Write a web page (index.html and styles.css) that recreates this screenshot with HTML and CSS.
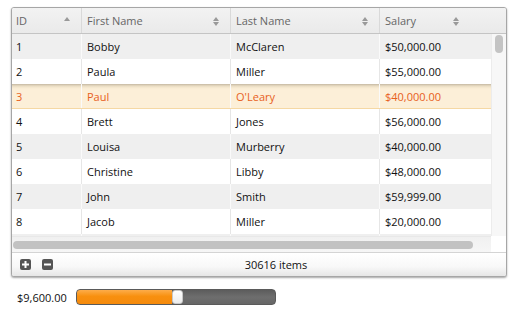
FILE: index.html
```html
<!DOCTYPE html>
<html>
<head>
<meta charset="utf-8">
<link rel="stylesheet" href="styles.css">
</head>
<body>
<div class="grid">
  <div class="head">
    <div class="hc c-id"><span>ID</span><i class="sort up"></i></div>
    <div class="hc c-fn"><span>First Name</span><i class="sort both"></i></div>
    <div class="hc c-ln"><span>Last Name</span><i class="sort both"></i></div>
    <div class="hc c-sal"><span>Salary</span><i class="sort both"></i></div>
    <div class="hc filler"></div>
  </div>
  <div class="main">
    <div class="rows">
      <div class="row alt"><div class="cell c-id">1</div><div class="cell c-fn">Bobby</div><div class="cell c-ln">McClaren</div><div class="cell c-last">$50,000.00</div></div>
      <div class="row"><div class="cell c-id">2</div><div class="cell c-fn">Paula</div><div class="cell c-ln">Miller</div><div class="cell c-last">$55,000.00</div></div>
      <div class="row sel"><div class="cell c-id">3</div><div class="cell c-fn">Paul</div><div class="cell c-ln">O'Leary</div><div class="cell c-last">$40,000.00</div></div>
      <div class="row"><div class="cell c-id">4</div><div class="cell c-fn">Brett</div><div class="cell c-ln">Jones</div><div class="cell c-last">$56,000.00</div></div>
      <div class="row alt"><div class="cell c-id">5</div><div class="cell c-fn">Louisa</div><div class="cell c-ln">Murberry</div><div class="cell c-last">$40,000.00</div></div>
      <div class="row"><div class="cell c-id">6</div><div class="cell c-fn">Christine</div><div class="cell c-ln">Libby</div><div class="cell c-last">$48,000.00</div></div>
      <div class="row alt"><div class="cell c-id">7</div><div class="cell c-fn">John</div><div class="cell c-ln">Smith</div><div class="cell c-last">$59,999.00</div></div>
      <div class="row"><div class="cell c-id">8</div><div class="cell c-fn">Jacob</div><div class="cell c-ln">Miller</div><div class="cell c-last">$20,000.00</div></div>
      <div class="row alt"><div class="cell c-id"></div><div class="cell c-fn"></div><div class="cell c-ln"></div><div class="cell c-last"></div></div>
    </div>
    <div class="vscroll"><div class="vthumb"></div></div>
  </div>
  <div class="hrow">
    <div class="hscroll"><div class="hthumb"></div></div>
    <div class="corner"></div>
  </div>
  <div class="foot">
    <div class="btns">
      <span class="btn"><svg width="11" height="11" viewBox="0 0 11 11"><rect x="2" y="4.5" width="7" height="2" fill="#fff"/><rect x="4.5" y="2" width="2" height="7" fill="#fff"/></svg></span>
      <span class="btn"><svg width="11" height="11" viewBox="0 0 11 11"><rect x="2" y="4.5" width="7" height="2" fill="#fff"/></svg></span>
    </div>
    <div class="count">30616 items</div>
  </div>
</div>
<div class="slider-row">
  <div class="slabel">$9,600.00</div>
  <div class="track">
    <div class="fill" style="width:95px"></div>
    <div class="thumb"></div>
  </div>
</div>
</body>
</html>
```

FILE: styles.css
```css
html, body {
  margin: 0;
  padding: 0;
  background: #fff;
}
body {
  padding: 7px 0 0 11px;
  font-family: "Open Sans", "Noto Sans", sans-serif;
  font-size: 11px;
  color: #111;
}
.grid {
  width: 494px;
  border: 1px solid #a6a6a6;
  border-radius: 3px;
  box-shadow: 0 1px 2px rgba(0,0,0,0.35);
  overflow: hidden;
  background: #fff;
}
.head {
  display: flex;
  height: 25px;
  border-bottom: 1px solid #c4c4c4;
  background: linear-gradient(#f2f2f2, #eaeaea);
  color: #666;
}
.hc {
  display: flex;
  align-items: center;
  justify-content: space-between;
  box-sizing: border-box;
  padding: 0 11px 0 5px;
  border-right: 1px solid #d9d9d9;
}
.hc.c-id { padding-left: 4px; }
.c-id { width: 70px; }
.c-fn { width: 149px; }
.c-ln { width: 149px; }
.c-sal { width: 90px; border-right: none; }
.filler { flex: 1; border-right: none; }
.sort {
  display: flex;
  flex-direction: column;
  align-items: center;
  align-self: flex-start;
  margin-top: 9px;
  width: 6px;
}
.sort::before,
.sort::after {
  content: "";
  width: 0;
  height: 0;
  border-left: 3px solid transparent;
  border-right: 3px solid transparent;
}
.sort::before { border-bottom: 4px solid #999; }
.sort.both::after { border-top: 4px solid #999; margin-top: 1px; }
.sort.up::after { display: none; }

.main {
  display: flex;
  height: 202px;
}
.rows {
  width: 479px;
  overflow: hidden;
}
.row {
  display: flex;
  height: 25px;
  background: #fff;
}
.row.alt { background: #efefef; }
.row.sel {
  height: 24px;
  background: linear-gradient(#c4b8a2, #e9dcc2 2px, #f8ebd2 4px, #fcefd8 6px, #fcefd8);
  border-bottom: 1px solid #f5d8a4;
  color: #e8601c;
}
.cell {
  display: flex;
  align-items: center;
  box-sizing: border-box;
  padding-left: 5px;
  border-right: 1px solid #e6e6e6;
}
.cell.c-id { padding-left: 4px; }
.row.alt .cell, .row.sel .cell { border-right-color: #fafafa; }
.c-last { flex: 1; border-right: none; }
.vscroll {
  width: 15px;
  background: #f7f7f7;
  border-left: 1px solid #ececec;
  box-sizing: border-box;
  padding: 1px 0 0 3px;
}
.vthumb {
  width: 8px;
  height: 18px;
  border-radius: 4px;
  background: #c4c4c4;
}
.hrow {
  display: flex;
  height: 16px;
}
.hscroll {
  width: 479px;
  box-sizing: border-box;
  padding: 4px 0 0 1px;
  background: linear-gradient(#f0f0f0, #f6f6f6);
  border-top: 1px solid #e8e8e8;
}
.hthumb {
  width: 460px;
  height: 8px;
  border-radius: 4px;
  background: #c2c2c2;
}
.corner {
  flex: 1;
  background: #fff;
}
.foot {
  display: flex;
  align-items: center;
  height: 23px;
  border-top: 1px solid #d4d4d4;
  background: linear-gradient(#ffffff, #f8f8f8 60%, #e6e6e6);
  padding: 0 15px 0 8px;
  color: #111;
}
.btns {
  display: flex;
  gap: 11px;
  margin-right: 8px;
}
.btn {
  display: block;
  width: 11px;
  height: 11px;
  border-radius: 2px;
  background: #555;
}
.btn svg { display: block; }
.count {
  flex: 1;
  text-align: center;
}
.slider-row {
  display: flex;
  align-items: center;
  margin-top: 12px;
  height: 16px;
}
.slabel {
  width: 59px;
  padding-left: 6px;
  color: #111;
}
.track {
  position: relative;
  display: flex;
  width: 200px;
  height: 16px;
  box-sizing: border-box;
  border: 1px solid #5a5a5a;
  border-radius: 4px;
  background: linear-gradient(#5c5c5c, #6e6e6e 50%, #666);
  overflow: hidden;
}
.fill {
  height: 100%;
  background: linear-gradient(#fdad4a, #f8900f 45%, #f58a0c);
}
.thumb {
  width: 11px;
  height: 100%;
  box-sizing: border-box;
  border: 1px solid #c8c8c8;
  border-radius: 3px;
  background: linear-gradient(#ffffff, #ececec);
}
```
